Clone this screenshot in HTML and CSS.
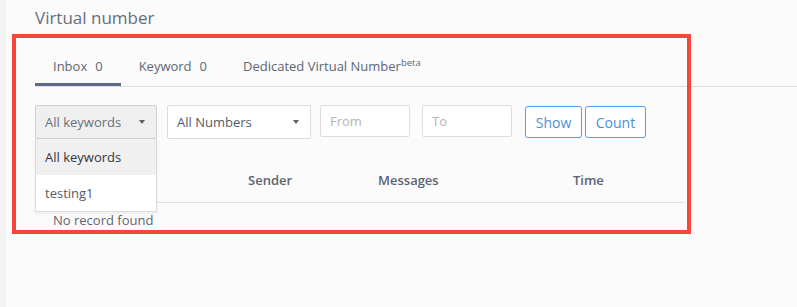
FILE: index.html
```html
<!DOCTYPE html>
<html>
    <head>
        <meta charset="utf-8">
        <title>Virtual number</title>
        <link rel="stylesheet" href="styles.css">
    </head>
    <body>
    <div class="page">
        <h1 class="title">Virtual number</h1>
        <ul class="tabs">
            <li class="tab active">Inbox<span class="count">0</span></li>
            <li class="tab">Keyword<span class="count">0</span></li>
            <li class="tab">Dedicated Virtual Number<sup class="beta">beta</sup></li>
        </ul>
        <div class="filters">
            <div class="select-wrap">
                <div class="select open" id="keywords">All keywords <span class="caret"></span></div>
                <div class="dropdown">
                    <div class="item selected">All keywords</div>
                    <div class="item">testing1</div>
                </div>
            </div>
            <div class="select wide">All Numbers <span class="caret"></span></div>
            <input type="text" class="field from" placeholder="From">
            <input type="text" class="field to" placeholder="To">
            <button class="btn show">Show</button>
            <button class="btn count-btn">Count</button>
        </div>
        <div class="table">
            <div class="thead">
                <div></div>
                <div>Sender</div>
                <div>Messages</div>
                <div>Time</div>
            </div>
            <div class="empty">No record found</div>
        </div>
    </div>
    <div class="highlight"></div>
    </body>
</html>
```

FILE: styles.css
```css
body{
    margin: 0;
    min-height: 307px;
    background: #fbfbfb;
    border-left: 6px solid #f3f3f3;
    font-family: "Open Sans", "Liberation Sans", sans-serif;
    font-size: 13px;
    color: #5e6674;
}
.page{
    padding: 6px 0 0 29px;
}
.title{
    margin: 0;
    font-size: 17px;
    line-height: 24px;
    font-weight: 400;
    color: #656d7b;
}
.tabs{
    display: flex;
    margin: 17px 0 0;
    padding: 0;
    list-style: none;
    border-bottom: 1px solid #dedede;
}
.tab{
    padding: 10px 18px 8px;
    line-height: 18px;
    border-bottom: 3px solid transparent;
}
.tab.active{
    border-bottom-color: #5d6b85;
}
.count{
    margin-left: 8px;
}
.beta{
    font-size: 9.5px;
    line-height: 0;
    vertical-align: 5px;
}
.filters{
    display: flex;
    align-items: flex-start;
    margin-top: 18px;
}
.select-wrap{
    position: relative;
    margin-right: 10px;
}
.select{
    box-sizing: border-box;
    width: 122px;
    height: 34px;
    padding: 0 11px 0 9px;
    display: flex;
    align-items: center;
    justify-content: space-between;
    border: 1px solid #dcdcdc;
    border-radius: 2px;
    background: #fff;
    color: #555b66;
}
.select.open{
    background: #efefef;
    border-color: #cfcfcf;
    color: #6a707a;
}
.select.wide{
    width: 144px;
    margin-right: 9px;
}
.caret{
    width: 0;
    height: 0;
    border-left: 3px solid transparent;
    border-right: 3px solid transparent;
    border-top: 4px solid #5c5f66;
}
.dropdown{
    position: absolute;
    top: 34px;
    left: 0;
    width: 122px;
    box-sizing: border-box;
    background: #fff;
    border: 1px solid #dcdcdc;
    border-top: none;
    box-shadow: 0 2px 4px rgba(0, 0, 0, 0.06);
}
.item{
    height: 36px;
    line-height: 36px;
    padding: 0 9px;
    color: #555b66;
}
.item.selected{
    background: #f0f0f0;
    color: #333840;
}
.field{
    box-sizing: border-box;
    width: 90px;
    height: 32px;
    padding: 0 9px;
    border: 1px solid #dedede;
    border-radius: 2px;
    background: #fff;
    font-family: inherit;
    font-size: 13px;
}
.field::placeholder{
    color: #b4b4b4;
}
.from{
    margin-right: 12px;
}
.to{
    margin-right: 13px;
}
.btn{
    height: 32px;
    margin-top: 1px;
    padding: 0;
    border: 1px solid #5b9be3;
    border-radius: 3px;
    background: #fff;
    color: #4a8fdc;
    font-family: inherit;
    font-size: 14px;
}
.show{
    width: 57px;
    margin-right: 3px;
}
.count-btn{
    width: 61px;
}
.table{
    width: 649px;
    margin-top: 21px;
}
.thead{
    display: grid;
    grid-template-columns: 213px 130px 195px 1fr;
    padding: 11px 0 13px;
    line-height: 18px;
    font-weight: 600;
    color: #5b6372;
    border-bottom: 1px solid #dedede;
}
.empty{
    padding: 8px 18px;
    line-height: 18px;
}
.highlight{
    position: absolute;
    top: 34px;
    left: 12px;
    width: 679px;
    height: 200px;
    box-sizing: border-box;
    border: 4px solid #f5473a;
}
```
